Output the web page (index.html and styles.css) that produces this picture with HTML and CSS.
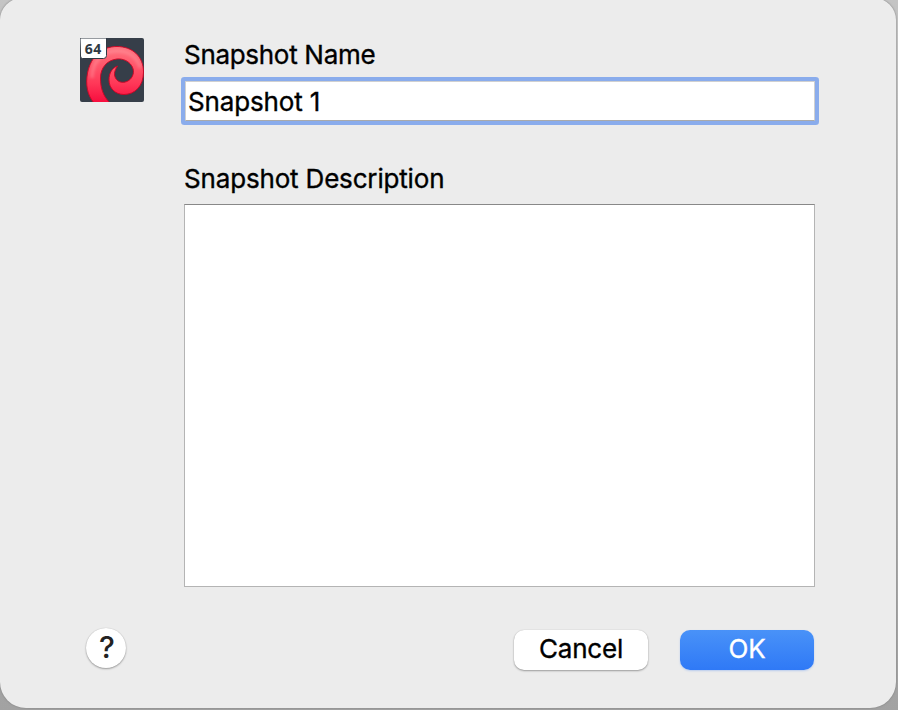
FILE: index.html
```html
<!DOCTYPE html>
<html lang="en">
<head>
<meta charset="utf-8">
<title>Snapshot</title>
<link rel="stylesheet" href="styles.css">
</head>
<body>
<main class="dialog">
  <div class="content">
    <svg class="app-icon" viewBox="0 0 64 64" aria-hidden="true">
      <defs>
        <linearGradient id="swirl" x1="0" y1="0" x2="0" y2="1">
          <stop offset="0" stop-color="#ff7480"/>
          <stop offset=".3" stop-color="#ff5a6d"/>
          <stop offset=".65" stop-color="#ff3858"/>
          <stop offset="1" stop-color="#f70b3d"/>
        </linearGradient>
        <filter id="soft" x="-20%" y="-20%" width="140%" height="140%"><feGaussianBlur stdDeviation="1.8"/></filter>
        <clipPath id="tile"><rect width="64" height="64" rx="2"/></clipPath>
      </defs>
      <g clip-path="url(#tile)">
        <rect width="64" height="64" fill="#363e49"/>
        <path d="M14 65C7 57 5.500 46 7.500 35C11 18 22 8.500 37 8.500C52 8.500 63.500 18 63.500 34C63.500 48 55 56.500 44 56.500C35 56.500 29 50 29 42C29 35 32 30 37.500 28C34 33 33.500 38 36.500 41.500C40 45.500 46 45 50 41.500C54 37.500 54.500 32 51.500 27.500C48.500 23 43 20.500 37 21C27 22 20.500 30 20.500 40C20.500 50 23 58 30 65Z" fill="url(#swirl)" stroke="#c80827" stroke-width="1"/>
        <path d="M12 40C12 24 22 13 37 13C50 13 58 20 60 30" fill="none" stroke="#ffa4aa" stroke-width="3.500" opacity=".4" filter="url(#soft)"/>
      </g>
      <path d="M0 0H26.500V17.500Q26.500 20.500 23.500 20.500H2.500Q.5 20.500 .5 18Z" fill="#fff" stroke="#303943"/>
      <text class="badge" x="4.800" y="15.800">64</text>
    </svg>
    <form class="fields">
      <label class="label name-label" for="name">Snapshot Name</label>
      <input class="name" id="name" value="Snapshot 1">
      <label class="label desc-label" for="desc">Snapshot Description</label>
      <textarea class="desc" id="desc"></textarea>
    </form>
  </div>
  <footer class="actions">
    <button class="help" aria-label="Help"><span>?</span></button>
    <button class="button cancel"><span>Cancel</span></button>
    <button class="button ok"><span>OK</span></button>
  </footer>
</main>
</body>
</html>
```
FILE: styles.css
```css
* { box-sizing: border-box; }
html, body { margin: 0; height: 710px; overflow: hidden; }
body { background: linear-gradient(#c4c4c4, #a2a2a2); font-family: Inter, sans-serif; font-size: 26px; color: #000; }
.dialog { width: 896px; height: 710px; margin-top: -2px; padding: 40px 0 0 80px; background: #ececec; border-radius: 22px 22px 26px 26px; box-shadow: 0 0 2px #777; }
.content { display: flex; gap: 40px; height: 549px; }
.app-icon { width: 64px; height: 64px; flex: none; }
.badge { font: bold 14px "Noto Sans", sans-serif; letter-spacing: .5px; fill: #303943; }
.fields { display: flex; flex-direction: column; width: 631px; }
.label, .name, .button { -webkit-text-stroke: .35px; }
.label { display: block; height: 34px; line-height: 34px; letter-spacing: -.3px; white-space: nowrap; }
.desc-label { letter-spacing: -.17px; }
.name { display: block; width: 630px; height: 40px; margin: 9px 0 41px 1px; padding: 1px 2px 0; border: 1px solid #d0d0d0; border-bottom-color: #aaa; border-radius: 1px; box-shadow: 0 0 0 4px #8aacec; outline: none; background: #fff; font: inherit; letter-spacing: -.15px; color: inherit; }
.desc { display: block; width: 631px; height: 383px; margin-top: 8px; padding: 4px; border: 1px solid #b4b4b4; border-top-color: #888; border-radius: 0; outline: none; resize: none; background: #fff; font: inherit; }
.actions { display: flex; align-items: center; width: 734px; height: 40px; margin-top: 43px; }
button { display: block; padding: 0 0 4px; border: 0; font: inherit; color: #000; }
.help { width: 40px; height: 40px; margin: -4px auto 0 6px; border-radius: 50%; background: #fff; box-shadow: 0 1px 2px #0005, 0 0 1px #0003; font-size: 30px; font-weight: 500; color: #222; padding: 0 0 2px 2px; }
.button { width: 134px; height: 40px; border-radius: 10px; letter-spacing: -.2px; }
.cancel { margin-right: 32px; background: #fff; box-shadow: 0 1px 2px #0005, 0 0 1px #0003; }
.ok { background: linear-gradient(#4992f8, #2f79f6); color: #fff; box-shadow: 0 1px 2px #2f79f644; }
```
